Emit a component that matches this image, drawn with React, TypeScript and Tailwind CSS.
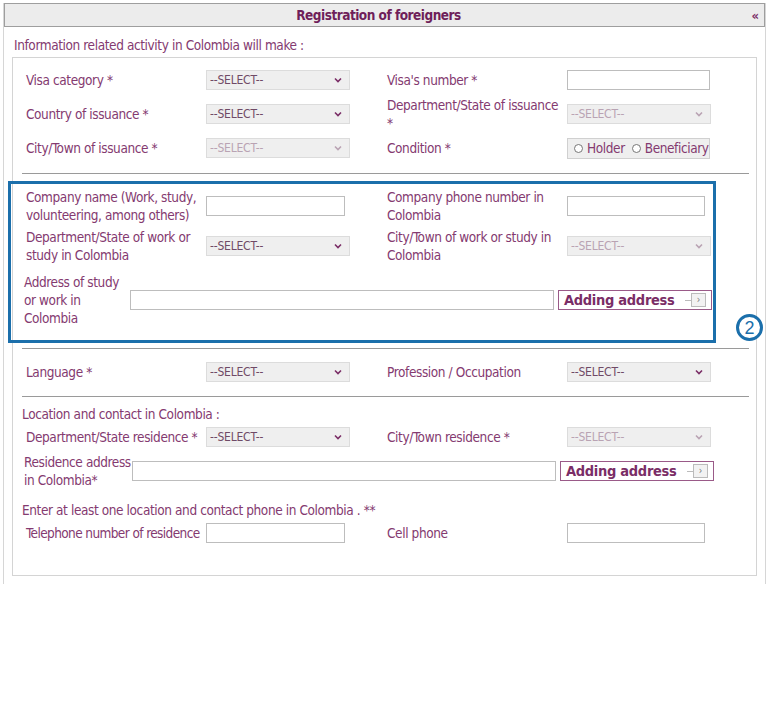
import React from "react";

const font = "font-['Liberation_Sans_Narrow','DejaVu_Sans_Condensed','Liberation_Sans',sans-serif]";

function Label({ children, className = "" }: { children: React.ReactNode; className?: string }) {
  return <div className={`text-[13.5px] tracking-[-0.4px] leading-[18px] text-[#843a70] whitespace-nowrap ${className}`}>{children}</div>;
}

function Select({ disabled = false }: { disabled?: boolean }) {
  return (
    <div className="w-[144px] h-[20px] shrink-0 bg-[#efefef] border border-[#dcdcdc] flex items-center justify-between pl-[3px] pr-[7px]">
      <span className={`text-[12px] tracking-[-0.2px] leading-none ${disabled ? "text-[#b9a3b3]" : "text-[#6f4a66]"}`}>--SELECT--</span>
      <svg width="8" height="6" viewBox="0 0 8 6">
        <path d="M1 1.5l3 3 3-3" fill="none" stroke={disabled ? "#b9a3b3" : "#7a2d66"} strokeWidth="1.6" />
      </svg>
    </div>
  );
}

function Input({ w }: { w: string }) {
  return <div className={`${w} h-[20px] shrink-0 bg-white border border-[#bdbdbd]`} />;
}

function Field({ label, children }: { label: React.ReactNode; children: React.ReactNode }) {
  return (
    <div className="w-[361px] shrink-0 flex items-center">
      <Label className="w-[180px] shrink-0">{label}</Label>
      {children}
    </div>
  );
}

function AddButton() {
  return (
    <div className="w-[154px] h-[20px] shrink-0 border border-[#9a5a88] bg-white flex items-center justify-between pl-[5px] pr-[5px]">
      <span className="text-[14.5px] tracking-[-0.3px] font-bold text-[#7a2d66] leading-none">Adding address</span>
      <div className="flex items-center">
        <div className="w-[6px] h-px bg-[#bbb]" />
        <div className="w-[15px] h-[14px] bg-[#f2f2f2] border border-[#bbb] flex items-center justify-center text-[10px] leading-none text-[#777]">›</div>
      </div>
    </div>
  );
}

function Divider({ className = "" }: { className?: string }) {
  return <div className={`ml-[9px] mr-[7px] h-px bg-[#9a9a9a] ${className}`} />;
}

function Radio({ label }: { label: string }) {
  return (
    <div className="flex items-center gap-[4px]">
      <div className="w-[9px] h-[9px] shrink-0 rounded-full border border-[#777] bg-white" />
      <span>{label}</span>
    </div>
  );
}

export default function App() {
  return (
    <div className={`w-[768px] h-[708px] bg-white ${font}`}>
      <div className="ml-[3px] w-[763px] h-[581px] border-l border-r border-[#d6d6d6] relative">
        {/* header */}
        <div className="mt-[3px] h-[24px] border border-[#9e9e9e] bg-[#ececec] flex items-center relative">
          <div className="flex-1 text-center pr-[12px] text-[13.5px] tracking-[-0.5px] font-bold text-[#6f1f5a]">Registration of foreigners</div>
          <span className="absolute right-[5px] top-[2px] text-[13px] font-bold text-[#7a2d66]">«</span>
        </div>

        <Label className="mt-[9px] ml-[10px]">Information related activity in Colombia will make :</Label>

        <div className="mt-[3px] ml-[8px] w-[745px] h-[519px] border border-[#d4d4d4] pt-[5px] relative">
          <div className="pl-[13px]">
            <div className="flex items-center h-[34px]">
              <Field label="Visa category *"><Select /></Field>
              <Field label="Visa's number *"><Input w="w-[143px]" /></Field>
            </div>
            <div className="flex items-center h-[34px]">
              <Field label="Country of issuance *"><Select /></Field>
              <Field label={<>Department/State of issuance<br />*</>}><Select disabled /></Field>
            </div>
            <div className="flex items-center h-[34px]">
              <Field label="City/Town of issuance *"><Select disabled /></Field>
              <Field label="Condition *">
                <div className="w-[143px] h-[21px] shrink-0 bg-[#efefef] border border-[#d0d0d0] flex items-center pl-[6px] gap-[7px] text-[13.5px] tracking-[-0.4px] text-[#843a70]">
                  <Radio label="Holder" />
                  <Radio label="Beneficiary" />
                </div>
              </Field>
            </div>
          </div>

          <Divider className="mt-[8px]" />

          {/* highlighted block */}
          <div className="mt-[7px] ml-[-5px] w-[708px] h-[162px] border-[3px] border-[#1b6fab] pt-[2px]">
            <div className="pl-[15px]">
              <div className="flex items-center h-[40px]">
                <Field label={<>Company name (Work, study,<br />volunteering, among others)</>}><Input w="w-[139px]" /></Field>
                <Field label={<>Company phone number in<br />Colombia</>}><Input w="w-[138px]" /></Field>
              </div>
              <div className="flex items-center h-[40px]">
                <Field label={<>Department/State of work or<br />study in Colombia</>}><Select /></Field>
                <Field label={<>City/Town of work or study in<br />Colombia</>}><Select disabled /></Field>
              </div>
            </div>
            <div className="mt-[6px] h-[56px] pl-[13px] flex items-center">
              <Label className="w-[106px] shrink-0">Address of study<br />or work in<br />Colombia</Label>
              <Input w="w-[424px]" />
              <div className="ml-[4px]"><AddButton /></div>
            </div>
          </div>

          <div className="absolute left-[723px] top-[256px] w-[27px] h-[27px] rounded-full border-[3px] border-[#1b6fab] bg-white flex items-center justify-center text-[18px] leading-none text-[#1b6fab] font-['Liberation_Sans',sans-serif]">2</div>

          <Divider className="mt-[5px]" />

          <div className="pl-[13px] mt-[6px]">
            <div className="flex items-center h-[34px]">
              <Field label="Language *"><Select /></Field>
              <Field label="Profession / Occupation"><Select /></Field>
            </div>
          </div>

          <Divider className="mt-[7px]" />

          <Label className="mt-[8px] ml-[9px]">Location and contact in Colombia :</Label>

          <div className="pl-[13px] mt-[2px]">
            <div className="flex items-center h-[24px]">
              <Field label="Department/State residence *"><Select /></Field>
              <Field label="City/Town residence *"><Select disabled /></Field>
            </div>
          </div>

          <div className="mt-[3px] h-[38px] pl-[11px] flex items-center">
            <Label className="w-[108px] shrink-0">Residence address<br />in Colombia*</Label>
            <Input w="w-[424px]" />
            <div className="ml-[4px]"><AddButton /></div>
          </div>

          <Label className="mt-[11px] ml-[9px]">Enter at least one location and contact phone in Colombia . **</Label>

          <div className="pl-[13px] mt-[2px]">
            <div className="flex items-center h-[24px]">
              <Field label={<span className="tracking-[-0.6px]">Telephone number of residence</span>}><Input w="w-[139px]" /></Field>
              <Field label="Cell phone"><Input w="w-[138px]" /></Field>
            </div>
          </div>
        </div>
      </div>
    </div>
  );
}
